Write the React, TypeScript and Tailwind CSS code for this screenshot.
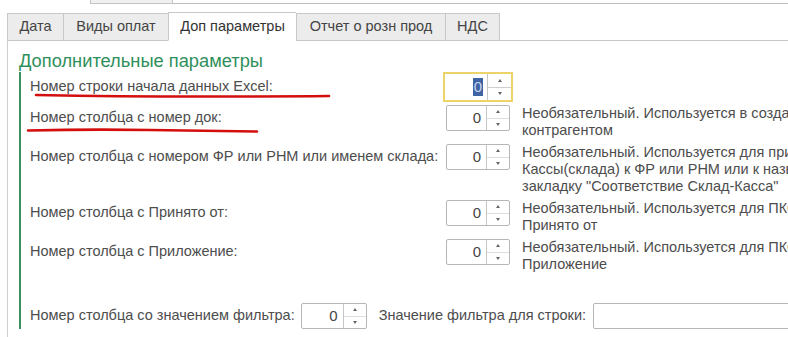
import React from "react";

const tabs = [
  { label: "Дата", w: "w-[56px]" },
  { label: "Виды оплат", w: "w-[105px]" },
  { label: "Доп параметры", w: "w-[128px]", active: true },
  { label: "Отчет о розн прод", w: "w-[149px]" },
  { label: "НДС", w: "w-[55px]" },
];

function Arrows() {
  return (
    <div className="w-[23px] border-l border-[#c6c6c6] flex flex-col">
      <div className="flex-1 flex items-center justify-center border-b border-[#dedede]">
        <div className="w-0 h-0 border-x-[2px] border-x-transparent border-b-[3px] border-b-[#666]" />
      </div>
      <div className="flex-1 flex items-center justify-center">
        <div className="w-0 h-0 border-x-[2px] border-x-transparent border-t-[3px] border-t-[#666]" />
      </div>
    </div>
  );
}

function Spin({ w = "w-[64px]" }: { w?: string }) {
  return (
    <div className={`flex h-[26px] ${w} shrink-0 border border-[#b6b6b6] rounded-[2px] bg-white`}>
      <div className="flex-1 flex items-center justify-end pr-[5px] text-[15px] text-[#444]">0</div>
      <Arrows />
    </div>
  );
}

function FocusedSpin() {
  return (
    <div className="flex h-[30px] w-[70px] shrink-0 border-2 border-[#ecd36a] bg-white">
      <div className="flex-1 flex items-center justify-end pr-[4px] text-[15px]">
        <span className="bg-[#3f64a4] text-[#c9d3f0] leading-[18px] px-[1px]">0</span>
      </div>
      <div className="w-[24px] border-l border-[#c6c6c6] flex flex-col">
        <div className="flex-1 flex items-center justify-center border-b border-[#cfcfcf]">
          <div className="w-0 h-0 border-x-[2px] border-x-transparent border-b-[3px] border-b-[#666]" />
        </div>
        <div className="flex-1 flex items-center justify-center">
          <div className="w-0 h-0 border-x-[2px] border-x-transparent border-t-[3px] border-t-[#666]" />
        </div>
      </div>
    </div>
  );
}

function Row({ label, lines }: { label: string; lines: string[] }) {
  return (
    <div className="flex items-start">
      <div className="w-[416px] h-[26px] flex items-center shrink-0">{label}</div>
      <Spin />
      <div className="ml-[12px] leading-[17px] whitespace-nowrap">
        {lines.map((l) => (
          <div key={l}>{l}</div>
        ))}
      </div>
    </div>
  );
}

export default function App() {
  return (
    <div className="relative w-[788px] h-[337px] overflow-hidden bg-white text-[14.5px] text-[#4d4d4d] font-['Liberation_Sans',Arial,sans-serif]">
      {/* top strip */}
      <div className="flex h-[4px]">
        <div className="w-[90px]" />
        <div className="w-[83px] bg-[#f0f0f0] border-x border-b border-[#c4c4c4]" />
        <div className="flex-1 border-b border-[#bdbdbd]" />
      </div>

      {/* tabs */}
      <div className="flex mt-[8px] pl-[7px] h-[29px]">
        {tabs.map((t, i) => (
          <div
            key={t.label}
            className={`${t.w} flex items-center justify-center text-[14.5px] border-t border-l border-[#c8c8c8] ${
              i === tabs.length - 1 ? "border-r" : ""
            } ${t.active ? "bg-white border-b border-b-white text-[#333]" : "bg-[#ececec] border-b text-[#444] mt-[1px]"}`}
          >
            {t.label}
          </div>
        ))}
        <div className="flex-1 border-b border-[#c8c8c8]" />
      </div>

      {/* panel */}
      <div className="ml-[7px] border-l border-[#cfcfcf] h-[300px]">
        <div className="pt-[10px] pl-[11px] text-[18.3px] leading-[20px] text-[#2f8f5c]">
          Дополнительные параметры
        </div>
        <div className="mt-[1px] ml-[11px] border-l-2 border-[#3d8f60] pl-[9px]">
          <div className="flex items-center h-[30px]">
            <div className="w-[413px] shrink-0">Номер строки начала данных Excel:</div>
            <FocusedSpin />
          </div>
          <div className="flex flex-col gap-[5px] mt-[3px]">
            <Row
              label="Номер столбца с номер док:"
              lines={["Необязательный. Используется в создании документов с", "контрагентом"]}
            />
            <Row
              label="Номер столбца с номером ФР или РНМ или именем склада:"
              lines={[
                "Необязательный. Используется для привязки",
                "Кассы(склада) к ФР или РНМ или к названию склада. См.",
                'закладку "Соответствие Склад-Касса"',
              ]}
            />
            <Row
              label="Номер столбца с Принято от:"
              lines={["Необязательный. Используется для ПКО, заполняет поле", "Принято от"]}
            />
            <Row
              label="Номер столбца с Приложение:"
              lines={["Необязательный. Используется для ПКО, заполняет поле", "Приложение"]}
            />
          </div>
          <div className="flex items-center h-[26px] mt-[30px] whitespace-nowrap">
            <div>Номер столбца со значением фильтра:</div>
            <div className="ml-[6px]">
              <Spin w="w-[66px]" />
            </div>
            <div className="ml-[12px]">Значение фильтра для строки:</div>
            <div className="ml-[7px] h-[26px] w-[300px] shrink-0 border border-[#b6b6b6] rounded-[2px] bg-white" />
          </div>
        </div>
      </div>

      {/* red annotation strokes */}
      <svg className="absolute left-0 top-0 pointer-events-none" width="788" height="337">
        <path d="M36 95 Q120 96.5 200 96.5 T329 96" stroke="#d40d0d" strokeWidth="2.6" fill="none" strokeLinecap="round" />
        <path d="M28 130.5 Q90 129 150 130 T257 131.5" stroke="#d40d0d" strokeWidth="2.6" fill="none" strokeLinecap="round" />
      </svg>
    </div>
  );
}
